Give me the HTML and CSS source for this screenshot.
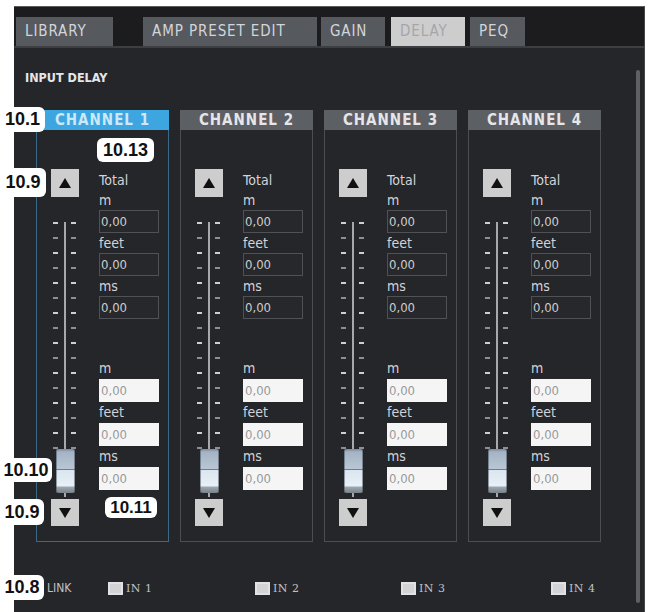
FILE: index.html
```html
<!DOCTYPE html>
<html>
<head>
<meta charset="utf-8">
<link rel="stylesheet" href="styles.css">
</head>
<body>
<div class="page">
  <div class="panel">
    <div class="tabs">
      <div class="tab t-lib">LIBRARY</div>
      <div class="tab t-amp">AMP PRESET EDIT</div>
      <div class="tab t-gain">GAIN</div>
      <div class="tab t-delay active">DELAY</div>
      <div class="tab t-peq">PEQ</div>
    </div>
    <div class="body">
      <div class="main">
        <div class="title">INPUT DELAY</div>
        <div class="channels">

          <div class="channel selected">
            <div class="ch-head">CHANNEL 1</div>
            <div class="ch-box">
              <div class="ctrl">
                <div class="btn up"></div>
                <div class="slider">
                  <div class="ticks">
                    <i></i><i></i><i></i><i></i><i></i><i></i><i></i><i></i>
                    <i></i><i></i><i></i><i></i><i></i><i></i><i></i><i></i>
                  </div>
                  <div class="handle"></div>
                </div>
                <div class="btn down"></div>
              </div>
              <div class="fields">
                <div class="lbl">Total</div>
                <div class="lbl">m</div>
                <div class="inp">0,00</div>
                <div class="lbl">feet</div>
                <div class="inp">0,00</div>
                <div class="lbl">ms</div>
                <div class="inp">0,00</div>
                <div class="spacer"></div>
                <div class="lbl lo">m</div>
                <div class="inp white">0,00</div>
                <div class="lbl lo">feet</div>
                <div class="inp white">0,00</div>
                <div class="lbl lo">ms</div>
                <div class="inp white">0,00</div>
              </div>
            </div>
          </div>

          <div class="channel">
            <div class="ch-head">CHANNEL 2</div>
            <div class="ch-box">
              <div class="ctrl">
                <div class="btn up"></div>
                <div class="slider">
                  <div class="ticks">
                    <i></i><i></i><i></i><i></i><i></i><i></i><i></i><i></i>
                    <i></i><i></i><i></i><i></i><i></i><i></i><i></i><i></i>
                  </div>
                  <div class="handle"></div>
                </div>
                <div class="btn down"></div>
              </div>
              <div class="fields">
                <div class="lbl">Total</div>
                <div class="lbl">m</div>
                <div class="inp">0,00</div>
                <div class="lbl">feet</div>
                <div class="inp">0,00</div>
                <div class="lbl">ms</div>
                <div class="inp">0,00</div>
                <div class="spacer"></div>
                <div class="lbl lo">m</div>
                <div class="inp white">0,00</div>
                <div class="lbl lo">feet</div>
                <div class="inp white">0,00</div>
                <div class="lbl lo">ms</div>
                <div class="inp white">0,00</div>
              </div>
            </div>
          </div>

          <div class="channel">
            <div class="ch-head">CHANNEL 3</div>
            <div class="ch-box">
              <div class="ctrl">
                <div class="btn up"></div>
                <div class="slider">
                  <div class="ticks">
                    <i></i><i></i><i></i><i></i><i></i><i></i><i></i><i></i>
                    <i></i><i></i><i></i><i></i><i></i><i></i><i></i><i></i>
                  </div>
                  <div class="handle"></div>
                </div>
                <div class="btn down"></div>
              </div>
              <div class="fields">
                <div class="lbl">Total</div>
                <div class="lbl">m</div>
                <div class="inp">0,00</div>
                <div class="lbl">feet</div>
                <div class="inp">0,00</div>
                <div class="lbl">ms</div>
                <div class="inp">0,00</div>
                <div class="spacer"></div>
                <div class="lbl lo">m</div>
                <div class="inp white">0,00</div>
                <div class="lbl lo">feet</div>
                <div class="inp white">0,00</div>
                <div class="lbl lo">ms</div>
                <div class="inp white">0,00</div>
              </div>
            </div>
          </div>

          <div class="channel">
            <div class="ch-head">CHANNEL 4</div>
            <div class="ch-box">
              <div class="ctrl">
                <div class="btn up"></div>
                <div class="slider">
                  <div class="ticks">
                    <i></i><i></i><i></i><i></i><i></i><i></i><i></i><i></i>
                    <i></i><i></i><i></i><i></i><i></i><i></i><i></i><i></i>
                  </div>
                  <div class="handle"></div>
                </div>
                <div class="btn down"></div>
              </div>
              <div class="fields">
                <div class="lbl">Total</div>
                <div class="lbl">m</div>
                <div class="inp">0,00</div>
                <div class="lbl">feet</div>
                <div class="inp">0,00</div>
                <div class="lbl">ms</div>
                <div class="inp">0,00</div>
                <div class="spacer"></div>
                <div class="lbl lo">m</div>
                <div class="inp white">0,00</div>
                <div class="lbl lo">feet</div>
                <div class="inp white">0,00</div>
                <div class="lbl lo">ms</div>
                <div class="inp white">0,00</div>
              </div>
            </div>
          </div>

        </div>
        <div class="link-row">
          <div class="link-lbl">LINK</div>
          <div class="cb-item w1"><span class="cb"></span>IN 1</div>
          <div class="cb-item w2"><span class="cb"></span>IN 2</div>
          <div class="cb-item w3"><span class="cb"></span>IN 3</div>
          <div class="cb-item w4"><span class="cb"></span>IN 4</div>
        </div>
      </div>
      <div class="scroll"></div>
    </div>
  </div>

  <div class="note n1">10.1</div>
  <div class="note n13">10.13</div>
  <div class="note n9a">10.9</div>
  <div class="note n10">10.10</div>
  <div class="note n9b">10.9</div>
  <div class="note n11">10.11</div>
  <div class="note n8">10.8</div>
</div>
</body>
</html>
```

FILE: styles.css
```css
html, body {
  margin: 0;
  padding: 0;
  background: #ffffff;
}

.page {
  position: relative;
  width: 648px;
  height: 612px;
  padding: 6px 0 0 14px;
  box-sizing: border-box;
  overflow: hidden;
  font-family: "DejaVu Sans Condensed", "DejaVu Sans", sans-serif;
}

.panel {
  width: 631px;
  height: 606px;
  box-sizing: border-box;
  background: #25262a;
  border-top: 1px solid #5c5c5e;
  border-right: 1px solid #46474b;
  display: flex;
  flex-direction: column;
}

/* ---------- tabs ---------- */
.tabs {
  height: 39px;
  background: #1c1c1f;
  border-bottom: 2px solid #3d3e42;
  display: flex;
  align-items: flex-end;
  padding-left: 2px;
  flex: none;
}

.tab {
  height: 29px;
  line-height: 29px;
  padding-left: 9px;
  box-sizing: border-box;
  background: #56595e;
  color: #d3d5db;
  font-size: 15px;
  letter-spacing: 0.9px;
  white-space: nowrap;
  overflow: hidden;
}

.t-lib { width: 97px; margin-right: 30px; }
.t-amp { width: 174px; margin-right: 4px; }
.t-gain { width: 64px; margin-right: 6px; }
.t-delay { width: 74px; margin-right: 5px; }
.t-peq { width: 55px; }

.tab.active {
  background: #cdcdce;
  color: #a6a6a8;
}

/* ---------- body ---------- */
.body {
  flex: 1;
  display: flex;
}

.main {
  flex: 1;
  padding-top: 22px;
}

.scroll {
  width: 4px;
  margin: 22px 4px 9px 0;
  background: #5f6063;
  border-radius: 2px;
}

.title {
  height: 16px;
  line-height: 16px;
  padding-left: 11px;
  font-weight: bold;
  font-size: 12.5px;
  color: #e6e6ea;
}

/* ---------- channels ---------- */
.channels {
  display: flex;
  gap: 11px;
  margin-top: 24px;
  padding-left: 22px;
}

.channel {
  width: 133px;
}

.ch-head {
  height: 20px;
  line-height: 20px;
  text-align: center;
  background: #5c5f63;
  color: #e6e6e8;
  font-weight: bold;
  font-size: 15px;
  letter-spacing: 1px;
  white-space: nowrap;
}

.selected .ch-head {
  background: #3da5df;
  color: #cbe9f9;
}

.ch-box {
  height: 412px;
  box-sizing: border-box;
  border: 1px solid #4b4d51;
  border-top: none;
  display: flex;
}

.selected .ch-box {
  border-color: #3a6a88;
}

.ctrl {
  width: 30px;
  margin-left: 13px;
  padding-top: 39px;
  display: flex;
  flex-direction: column;
  align-items: center;
}

.btn {
  width: 28px;
  height: 28px;
  background: #cdcdcd;
  display: flex;
  align-items: center;
  justify-content: center;
  flex: none;
}

.btn.down {
  height: 27px;
}

.btn.up::before {
  content: "";
  border-left: 6px solid transparent;
  border-right: 6px solid transparent;
  border-bottom: 10px solid #111;
}

.btn.down::before {
  content: "";
  border-left: 6px solid transparent;
  border-right: 6px solid transparent;
  border-top: 10px solid #111;
}

.slider {
  width: 30px;
  height: 302px;
  box-sizing: border-box;
  padding-top: 25px;
  background: linear-gradient(to right, transparent 14px, #a8a8aa 14px, #a8a8aa 16px, transparent 16px) no-repeat 0 25px / 30px 275px;
  display: flex;
  flex-direction: column;
  align-items: center;
}

.ticks {
  width: 30px;
  height: 227px;
  display: flex;
  flex-direction: column;
  justify-content: space-between;
}

.ticks i {
  display: flex;
  gap: 13px;
  padding-left: 3px;
  height: 2px;
}

.ticks i::before,
.ticks i::after {
  content: "";
  width: 5px;
  height: 2px;
  background: #cfcfd2;
}

.ticks i:nth-child(even)::before,
.ticks i:nth-child(even)::after {
  background: #8e8f93;
}

.handle {
  width: 19px;
  height: 44px;
  margin-top: 0;
  border-radius: 2px;
  background: linear-gradient(to bottom,
    #7b8a9a 0px, #a5b4c4 3px, #b8c6d5 20px,
    #6f7d8c 20px, #6f7d8c 21px,
    #dae5ef 21px, #e8f0f7 37px,
    #9ea7b1 38px, #7a828b 44px);
  box-shadow: inset 1px 0 0 rgba(60, 70, 80, 0.5), inset -1px 0 0 rgba(60, 70, 80, 0.5);
}

.fields {
  width: 60px;
  margin-left: 19px;
  padding-top: 40px;
}

.lbl {
  height: 20px;
  line-height: 20px;
  font-size: 14px;
  color: #d2d4da;
}

.lbl.lo {
  height: 21px;
  line-height: 21px;
}

.inp {
  height: 23px;
  box-sizing: border-box;
  border: 1px solid #4f5155;
  background: #27282b;
  color: #cdcdcf;
  font-size: 13px;
  line-height: 21px;
  padding-left: 1px;
}

.inp.white {
  background: #f5f5f5;
  border-color: #f5f5f5;
  color: #9a9a9c;
}

.spacer {
  height: 39px;
}

/* ---------- link row ---------- */
.link-row {
  display: flex;
  align-items: center;
  height: 16px;
  margin-top: 38px;
  padding-left: 33px;
  font-size: 12px;
  color: #c2c2c4;
}

.link-lbl {
  width: 61px;
}

.cb-item {
  display: flex;
  align-items: center;
  gap: 3px;
  font-family: "DejaVu Serif", serif;
  font-size: 11px;
  letter-spacing: 0.5px;
}

.w1 { width: 147px; }
.w2 { width: 146px; }
.w3 { width: 150px; }

.cb {
  width: 15px;
  height: 13px;
  background: #d3d3d5;
  box-shadow: inset 0 0 0 2px #e2e2e4;
}

/* ---------- annotation callouts ---------- */
.note {
  position: absolute;
  background: #ffffff;
  border-radius: 6px;
  font-family: "Liberation Sans", Arial, sans-serif;
  font-weight: bold;
  font-size: 18px;
  color: #111111;
  text-align: center;
  display: flex;
  align-items: center;
  justify-content: center;
}

.n1 { left: 0; top: 107px; width: 45px; height: 25px; }
.n13 { left: 97px; top: 138px; width: 57px; height: 24px; }
.n9a { left: 0; top: 168px; width: 46px; height: 29px; }
.n10 { left: 0; top: 458px; width: 52px; height: 24px; }
.n9b { left: 0; top: 499px; width: 44px; height: 26px; }
.n11 { left: 105px; top: 497px; width: 52px; height: 21px; font-size: 17px; }
.n8 { left: 0; top: 575px; width: 44px; height: 25px; }
```
